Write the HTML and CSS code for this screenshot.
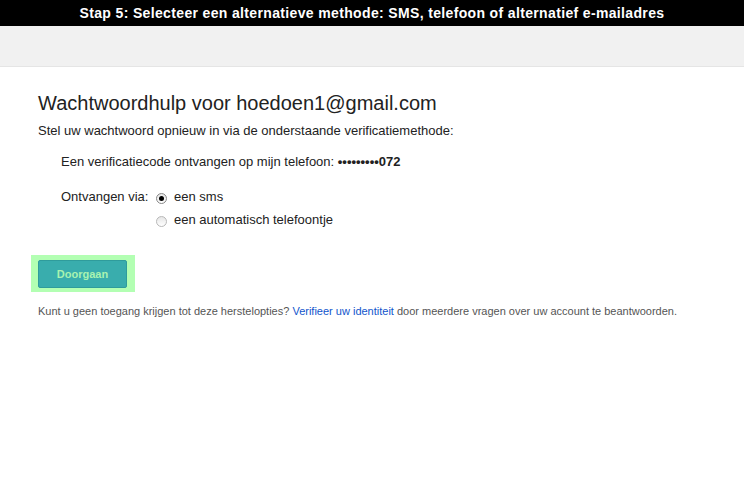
FILE: index.html
```html
<!DOCTYPE html>
<html>
<head>
<meta charset="utf-8">
<link rel="stylesheet" href="styles.css">
</head>
<body>
<div class="caption">Stap 5: Selecteer een alternatieve methode: SMS, telefoon of alternatief e-mailadres</div>
<div class="topbar"></div>
<main class="content">
  <h1 class="title">Wachtwoordhulp voor hoedoen1@gmail.com</h1>
  <p class="intro">Stel uw wachtwoord opnieuw in via de onderstaande verificatiemethode:</p>
  <p class="method">Een verificatiecode ontvangen op mijn telefoon: <b>•••••••••072</b></p>
  <div class="via">
    <span class="via-label">Ontvangen via:</span>
    <div class="options">
      <label class="opt"><span class="radio checked"></span>een sms</label>
      <label class="opt"><span class="radio"></span>een automatisch telefoontje</label>
    </div>
  </div>
  <div class="highlight"><button class="btn">Doorgaan</button></div>
  <p class="foot">Kunt u geen toegang krijgen tot deze herstelopties? <a href="#">Verifieer uw identiteit</a> door meerdere vragen over uw account te beantwoorden.</p>
</main>
</body>
</html>
```

FILE: styles.css
```css
html, body {
  margin: 0;
  padding: 0;
  background: #fff;
  font-family: "Liberation Sans", Arial, sans-serif;
  color: #222;
}
.caption {
  height: 26px;
  background: #000;
  color: #fff;
  font-weight: bold;
  font-size: 14px;
  line-height: 26px;
  text-align: center;
  letter-spacing: 0.35px;
}
.topbar {
  height: 40px;
  background: #f1f1f1;
  border-bottom: 1px solid #e5e5e5;
}
.content {
  padding: 24px 38px 0;
}
.title {
  margin: 0;
  font-size: 20px;
  font-weight: normal;
  line-height: 24px;
  color: #222;
}
.intro {
  margin: 8px 0 0;
  font-size: 13px;
  line-height: 16px;
  color: #222;
}
.method {
  margin: 15px 0 0 23px;
  font-size: 13px;
  line-height: 16px;
}
.method b {
  font-weight: bold;
}
.via {
  display: flex;
  margin: 19px 0 0 23px;
  font-size: 13px;
  line-height: 16px;
}
.via-label {
  width: 95px;
}
.options {
  display: flex;
  flex-direction: column;
  gap: 7px;
}
.opt {
  display: flex;
  align-items: center;
}
.radio {
  width: 11px;
  height: 11px;
  border: 1px solid #b8b8b8;
  border-radius: 50%;
  margin: 3px 7px 0 0;
  box-sizing: border-box;
  position: relative;
  background: linear-gradient(#e6e6e6, #fff);
}
.radio.checked {
  border-color: #888;
}
.radio.checked::after {
  content: "";
  position: absolute;
  left: 2px;
  top: 2px;
  width: 5px;
  height: 5px;
  border-radius: 50%;
  background: #000;
}
.highlight {
  display: inline-flex;
  margin: 27px 0 0 -7px;
  padding: 5px 8px 4px 7px;
  background: #b3ffb3;
}
.btn {
  width: 89px;
  height: 28px;
  background: #39adad;
  border: 1px solid #2f9c9c;
  border-radius: 2px;
  color: #a9f3b0;
  font-family: "Liberation Sans", Arial, sans-serif;
  font-size: 11px;
  font-weight: bold;
  padding: 0;
}
.foot {
  margin: 12px 0 0;
  font-size: 11px;
  line-height: 14px;
  color: #555;
}
.foot a {
  color: #1155cc;
  text-decoration: none;
}
```
